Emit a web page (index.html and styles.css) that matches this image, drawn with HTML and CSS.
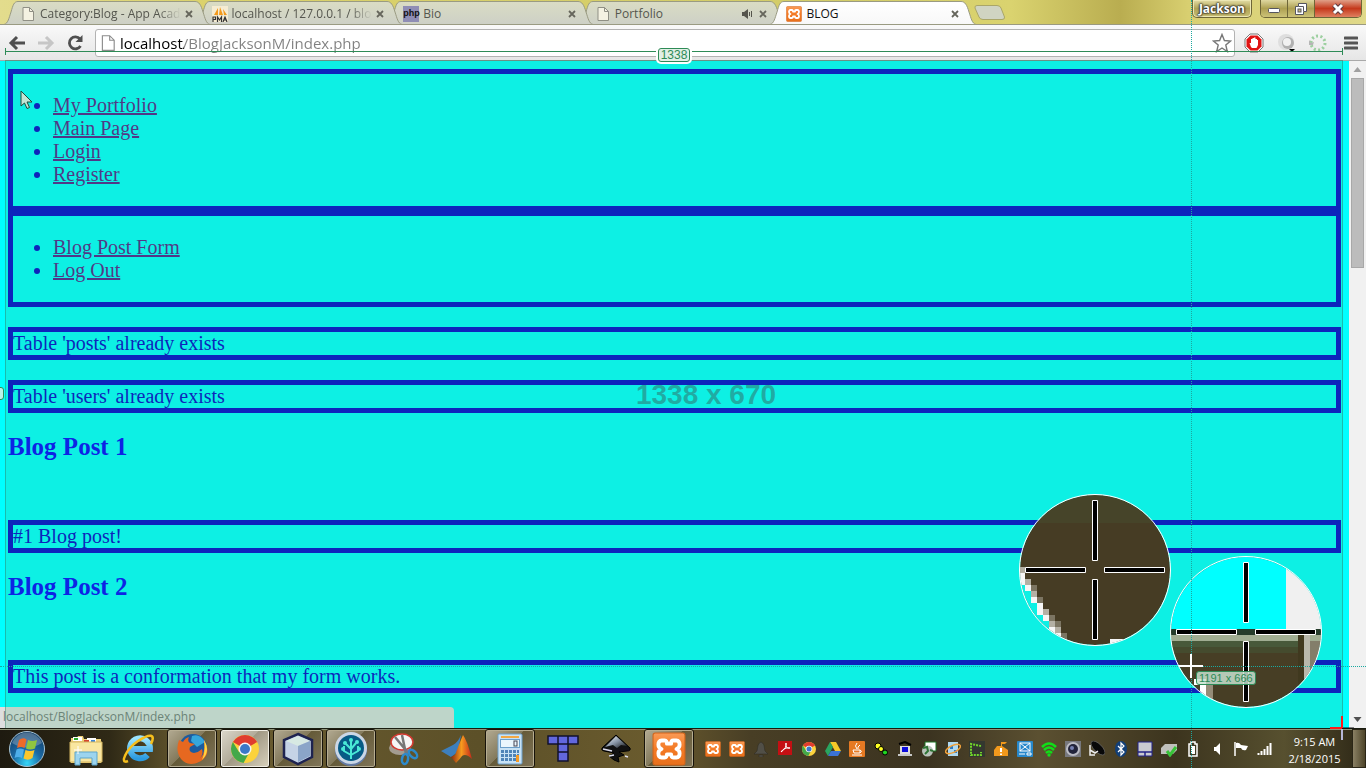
FILE: index.html
```html
<!DOCTYPE html>
<html lang="en">
<head>
<meta charset="utf-8">
<title>BLOG</title>
<link rel="stylesheet" href="styles.css">
</head>
<body>
<svg class="defs" aria-hidden="true">
  <defs>
    <linearGradient id="gTab" x1="0" y1="0" x2="0" y2="1"><stop offset="0" stop-color="#dadcc4"/><stop offset="1" stop-color="#cdd0c6"/></linearGradient>
    <linearGradient id="gActive" x1="0" y1="0" x2="0" y2="1"><stop offset="0" stop-color="#ffffff"/><stop offset="1" stop-color="#f8f8f8"/></linearGradient>
    <linearGradient id="gOrange" x1="0" y1="0" x2="0" y2="1"><stop offset="0" stop-color="#fa9a55"/><stop offset=".5" stop-color="#f47a25"/><stop offset="1" stop-color="#e8701c"/></linearGradient>
    <radialGradient id="gOrb" cx=".5" cy=".9" r=".9"><stop offset="0" stop-color="#35d6f8"/><stop offset=".45" stop-color="#1b6aa5"/><stop offset="1" stop-color="#123c66"/></radialGradient>
    <linearGradient id="gIe" x1="0" y1="0" x2="0" y2="1"><stop offset="0" stop-color="#9be4ff"/><stop offset="1" stop-color="#2c9be0"/></linearGradient>
    <linearGradient id="gMat" x1="0" y1="0" x2="1" y2="0"><stop offset="0" stop-color="#8a2a10"/><stop offset=".5" stop-color="#f79a1e"/><stop offset="1" stop-color="#c4281a"/></linearGradient>
    <linearGradient id="gInk" x1="0" y1="0" x2="1" y2="1"><stop offset="0" stop-color="#ffffff"/><stop offset=".5" stop-color="#8a97a8"/><stop offset="1" stop-color="#111111"/></linearGradient>
  </defs>
  <symbol id="tabShape" viewBox="0 0 206 25"><path d="M0 24.500C4 23.500 5 18 7 12C9 5 10 1.500 14 1.500H191C195 1.500 197 5 199 12C201 18 202 23.500 206 24.500Z"/></symbol>
  <symbol id="doc" viewBox="0 0 16 16"><path d="M3 1.500H9.500L13.500 5.500V14.500H3Z" fill="#f4f2e2" stroke="#8f8f84"/><path d="M9.500 1.500V5.500H13.500" fill="none" stroke="#8f8f84"/></symbol>
  <symbol id="xampp" viewBox="0 0 32 32"><rect x="1" y="1" width="30" height="30" rx="2" fill="url(#gOrange)" stroke="#d4651a"/><path d="M9 8Q6 8 6 12Q6 15 9 16Q6 17 6 20Q6 24 9 24H12Q14 24 14 21H18Q18 24 20 24H23Q26 24 26 20Q26 17 23 16Q26 15 26 12Q26 8 23 8H20Q18 8 18 11H14Q14 8 12 8Z" fill="none" stroke="#fff" stroke-width="3.600" stroke-linejoin="round"/></symbol>
  <symbol id="chrome" viewBox="0 0 32 32"><circle cx="16" cy="16" r="14" fill="#fbd23c"/><path d="M16 16L3.900 9A14 14 0 0 1 28.100 9Z" fill="#e03c2f"/><path d="M3.900 9A14 14 0 0 0 14.500 29.900L20 20L10 19Z" fill="#43a84a"/><circle cx="16" cy="16" r="6.500" fill="#f5f5f5"/><circle cx="16" cy="16" r="5" fill="#3a78c8"/></symbol>
  <symbol id="x" viewBox="0 0 16 16"><path d="M5 5L11 11M11 5L5 11" stroke="#66665c" stroke-width="1.800"/></symbol>
</svg>

<div class="desktop">
  <header class="titlebar">
    <div class="tabs">
      <div class="tab t1"><svg class="shape"><use href="#tabShape"/></svg><svg class="i16"><use href="#doc"/></svg><button class="tab-title" type="button">Category:Blog - App Acad</button><button class="close" type="button" aria-label="Close tab"><svg class="i16"><use href="#x"/></svg></button></div>
      <div class="tab t2"><svg class="shape"><use href="#tabShape"/></svg><svg class="i16" viewBox="0 0 16 16"><rect width="16" height="16" fill="#f5ecd2"/><path d="M2 9L6 2V9ZM7 9L8 1L11 9ZM12 9L11 3L15 9Z" fill="#f49a1c"/><path d="M1 16V11H3.500V13.500H1M5.500 16V11L7.500 14L9.500 11V16M11 16L13 11L15 16M12 14H14" fill="none" stroke="#333" stroke-width="1.200"/></svg><button class="tab-title" type="button">localhost / 127.0.0.1 / blog</button><button class="close" type="button" aria-label="Close tab"><svg class="i16"><use href="#x"/></svg></button></div>
      <div class="tab t3"><svg class="shape"><use href="#tabShape"/></svg><span class="php">php</span><button class="tab-title" type="button">Bio</button><button class="close" type="button" aria-label="Close tab"><svg class="i16"><use href="#x"/></svg></button></div>
      <div class="tab t4"><svg class="shape"><use href="#tabShape"/></svg><svg class="i16"><use href="#doc"/></svg><button class="tab-title" type="button">Portfolio</button><svg class="i16" viewBox="0 0 16 16"><path d="M3 6H5L9 3V13L5 10H3Z" fill="#55554c"/><path d="M10.500 6V10M12.500 5V11" stroke="#55554c"/></svg><button class="close" type="button" aria-label="Close tab"><svg class="i16"><use href="#x"/></svg></button></div>
      <div class="tab active"><svg class="shape"><use href="#tabShape"/></svg><svg class="i16"><use href="#xampp"/></svg><button class="tab-title" type="button">BLOG</button><button class="close" type="button" aria-label="Close tab"><svg class="i16"><use href="#x"/></svg></button></div>
      <button class="newtab" type="button" aria-label="New tab"><svg width="32" height="16" viewBox="0 0 32 16"><path d="M3 .5H23Q26 .5 27 3L30.500 12Q31 14.500 28 14.500H9Q6 14.500 5 12L1 3Q.5 .5 3 .5Z" fill="#d0d4c2" stroke="#aaa668"/></svg></button>
    </div>
    <div class="window-controls">
      <button class="user" type="button">Jackson</button>
      <div class="winbtns">
        <button class="wb" type="button" aria-label="Minimize"><svg width="14" height="14" viewBox="0 0 14 14"><rect x="1.500" y="6.500" width="11" height="4" rx="1" fill="#fff" stroke="#55555f"/></svg></button>
        <button class="wb" type="button" aria-label="Restore"><svg width="14" height="14" viewBox="0 0 14 14"><path d="M4.500 1.500H12.500V9.500H9.500V12.500H1.500V4.500H4.500Z" fill="#fff" stroke="#55555f"/><rect x="4" y="7" width="3" height="3" fill="#c9bf79" stroke="#55555f"/><path d="M5 4.500H9.500V9" fill="none" stroke="#55555f"/></svg></button>
        <button class="wb wclose" type="button" aria-label="Close"><svg width="14" height="14" viewBox="0 0 14 14"><path d="M3 3L11 11M11 3L3 11" stroke="#5b3a40" stroke-width="5"/><path d="M3 3L11 11M11 3L3 11" stroke="#fff" stroke-width="3"/></svg></button>
      </div>
    </div>
  </header>

  <nav class="toolbar">
    <button class="tool" type="button" aria-label="Back"><svg width="18" height="18" viewBox="0 0 18 18"><path d="M17 9H3M9 3L3 9L9 15" fill="none" stroke="#4f4f4f" stroke-width="3"/></svg></button>
    <button class="tool" type="button" aria-label="Forward"><svg width="18" height="18" viewBox="0 0 18 18"><path d="M1 9H15M9 3L15 9L9 15" fill="none" stroke="#c6c6c6" stroke-width="3"/></svg></button>
    <button class="tool" type="button" aria-label="Reload"><svg width="18" height="18" viewBox="0 0 18 18"><path d="M14 5A6 6 0 1 0 14.500 12" fill="none" stroke="#4f4f4f" stroke-width="2.800"/><path d="M16.500 1V8H9.500Z" fill="#4f4f4f"/></svg></button>
    <div class="omnibox">
      <svg width="18" height="18" viewBox="0 0 16 16"><path d="M3 1.500H9.500L13.500 5.500V14.500H3ZM9.500 1.500V5.500H13.500" fill="#fff" stroke="#8b8b8b"/></svg>
      <input class="url" type="text" value="localhost/BlogJacksonM/index.php" aria-label="Address">
      <button class="star" type="button" aria-label="Bookmark"><svg width="20" height="20" viewBox="0 0 20 20"><path d="M10 1.500L12.400 7.500L18.500 8L13.800 12L15.300 18.500L10 15L4.700 18.500L6.200 12L1.500 8L7.600 7.500Z" fill="#fff" stroke="#777" stroke-width="1.400"/></svg></button>
    </div>
    <div class="extensions">
      <button class="tool" type="button" aria-label="Ad blocker"><svg width="20" height="20" viewBox="0 0 20 20"><path d="M6 1H14L19 6V14L14 19H6L1 14V6Z" fill="#fff" stroke="#777"/><path d="M6.500 2.500H13.500L17.500 6.500V13.500L13.500 17.500H6.500L2.500 13.500V6.500Z" fill="#e01515"/><path d="M7 14L5.500 10L7 10V6H8.500V5H10V4.500H11.500V6H13V7H14V12L12.500 15H8Z" fill="#fff"/></svg></button>
      <button class="tool" type="button" aria-label="Extension"><svg width="20" height="20" viewBox="0 0 20 20"><circle cx="10" cy="9" r="8" fill="#dedede"/><circle cx="12" cy="10" r="6" fill="#b0b0b0"/><circle cx="11" cy="9" r="4" fill="#f1f1f1"/><path d="M13 16H19L16 19Z" fill="#000"/></svg></button>
      <button class="tool" type="button" aria-label="Extension"><svg width="20" height="20" viewBox="0 0 20 20"><circle cx="10" cy="10" r="7" fill="none" stroke="#9ccf9f" stroke-width="3" stroke-dasharray="2 2.400"/><path d="M1 7L3 10L6 9L5 12L1 12" fill="#b5b5b5"/></svg></button>
      <button class="tool" type="button" aria-label="Menu"><svg width="14" height="20" viewBox="0 0 14 20"><path d="M1 5H13M1 10H13M1 15H13" stroke="#555" stroke-width="3" stroke-linecap="round"/></svg></button>
    </div>
  </nav>

  <div class="viewport">
    <main class="page">
      <nav class="box"><ul>
        <li><a href="#portfolio">My Portfolio</a></li>
        <li><a href="#main">Main Page</a></li>
        <li><a href="#login">Login</a></li>
        <li><a href="#register">Register</a></li>
      </ul></nav>
      <nav class="box"><ul>
        <li><a href="#form">Blog Post Form</a></li>
        <li><a href="#logout">Log Out</a></li>
      </ul></nav>
      <p class="box">Table 'posts' already exists</p>
      <p class="box">Table 'users' already exists</p>
      <h2>Blog Post 1</h2>
      <br>
      <p class="box">#1 Blog post!</p>
      <h2>Blog Post 2</h2>
      <br>
      <p class="box">This post is a conformation that my form works.</p>
    </main>
    <div class="scrollbar">
      <svg width="17" height="17" viewBox="0 0 17 17"><path d="M8.500 6L12.500 11H4.500Z" fill="#a0a0a0"/></svg>
      <div class="track"><div class="thumb"></div></div>
      <svg width="17" height="17" viewBox="0 0 17 17"><path d="M4.500 6H12.500L8.500 11Z" fill="#505050"/></svg>
    </div>
    <div class="status">localhost/BlogJacksonM/index.php</div>
    <svg class="pointer" width="13" height="20" viewBox="0 0 13 20"><path d="M1 1V16L4.500 13L7 18.500L9.500 17.500L7 12H12Z" fill="#e4f2ec" stroke="#17302c"/></svg>
  </div>

  <footer class="taskbar">
    <button class="start" type="button" aria-label="Start"><svg width="38" height="38" viewBox="0 0 38 38"><circle cx="19" cy="19" r="17.500" fill="url(#gOrb)" stroke="#a8c4d4"/><path d="M4 13A16 16 0 0 1 34 13Q19 22 4 13Z" fill="#fff" opacity=".25"/><path d="M11 10Q15 7 18.500 9.500L16.500 18Q13 16 9 18Z" fill="#ee6a2a"/><path d="M20 10Q24 12 29 10L27 18.500Q22 20.500 18 18.500Z" fill="#8fc640"/><path d="M8.500 19.500Q12 17.500 16 19.500L14 28Q10 26 6.500 28Z" fill="#4eaeea"/><path d="M17.500 20Q22 22 26.500 20L24.500 28Q20 31 15.500 28.500Z" fill="#fbc72c"/></svg></button>
    <div class="apps">
      <button class="app" type="button" aria-label="Explorer"><svg width="34" height="34" viewBox="0 0 34 34"><path d="M2 6H8L9 4H14L15 7H32V31H2Z" fill="#f0d27a"/><path d="M4 5H13V9H4ZM18 6H27V10H18Z" fill="#fff"/><path d="M5 6H9V8H5Z" fill="#2da82d"/><path d="M15 8H20V10H15Z" fill="#d6452f"/><path d="M22 8H26V10H22Z" fill="#3c86d8"/><path d="M1 10H33V30H1Z" fill="#f9e6a0" stroke="#d3b560"/><path d="M6 33V20H28V33H23V26H11V33Z" fill="#9cd4ee" stroke="#5ea5c9"/><path d="M9 14V22M5 18H13" stroke="#fff"/></svg></button>
      <button class="app" type="button" aria-label="Internet Explorer"><svg width="34" height="34" viewBox="0 0 34 34"><path d="M25.500 23A10 10 0 1 1 28 17H9" fill="none" stroke="url(#gIe)" stroke-width="6"/><path d="M6 29C-3 33 4 17 16 9S34 2 29 12" fill="none" stroke="#f6bf1d" stroke-width="2.500"/></svg></button>
      <button class="app open" type="button" aria-label="Firefox"><svg width="34" height="34" viewBox="0 0 34 34"><circle cx="18" cy="16" r="14" fill="#1c5c9f"/><path d="M17 4Q25 1 30 10L22 15L16 9Z" fill="#35a6dc"/><path d="M4 8L8 10Q10 6 14 5Q12 9 15 11L20 12L15 15Q13 20 19 21Q24 20 27 17Q29 24 23 27Q31 24 29 8Q37 22 26 29Q14 36 6 27Q0 19 4 8Z" fill="#e66820"/><path d="M29 8Q36 19 27 28Q31 20 29 8Z" fill="#ffd840"/></svg></button>
      <button class="app open current" type="button" aria-label="Chrome"><svg width="32" height="32"><use href="#chrome"/></svg></button>
      <button class="app open" type="button" aria-label="NetBeans"><svg width="34" height="34" viewBox="0 0 34 34"><path d="M17 2L31 8V25L17 32L3 25V8Z" fill="#c5d3e6" stroke="#1e2350" stroke-width="2.500"/><path d="M5 9L17 4L29 9L17 14Z" fill="#d7e9e3"/><path d="M17 14L29 9V24L17 30Z" fill="#8ba5c8"/></svg></button>
      <button class="app open" type="button" aria-label="SmartGit"><svg width="34" height="36" viewBox="0 0 34 36"><circle cx="17" cy="19" r="16" fill="#637aa4"/><circle cx="17" cy="17" r="16" fill="#cbd7e6"/><circle cx="17" cy="17" r="13" fill="#075b86"/><path d="M17 28V10M17 24L10 20V15M17 24L24 20V15M17 18L12 13M17 18L22 12" fill="none" stroke="#49ead6" stroke-width="2"/><g fill="#49ead6"><circle cx="17" cy="9" r="2"/><circle cx="11" cy="12" r="2"/><circle cx="23" cy="11" r="2"/><circle cx="9" cy="18" r="2"/><circle cx="25" cy="18" r="2"/></g></svg></button>
      <button class="app" type="button" aria-label="Snipping Tool"><svg width="34" height="34" viewBox="0 0 34 34"><ellipse cx="13" cy="16" rx="11" ry="7" fill="#a39c90"/><ellipse cx="15" cy="10" rx="11" ry="8" fill="#f6f6f6" stroke="#d43a31" stroke-width="1.500"/><path d="M8 5L22 22M15 3L19 22" stroke="#777" stroke-width="2.500"/><ellipse cx="26" cy="22" rx="3" ry="5" transform="rotate(-45 26 22)" fill="none" stroke="#2d8acb" stroke-width="2.500"/><ellipse cx="18" cy="27" rx="3" ry="5" transform="rotate(10 18 27)" fill="none" stroke="#2d8acb" stroke-width="2.500"/></svg></button>
      <button class="app" type="button" aria-label="MATLAB"><svg width="34" height="34" viewBox="0 0 34 34"><path d="M1 19L11 14Q16 12 19 7L21 3L18 20L11 25Z" fill="#3d7fbd"/><path d="M11 25L15 23Q19 12 23 3Q27 8 32 27Q26 21 22 24Q20 27 16 31Z" fill="url(#gMat)"/></svg></button>
      <button class="app open" type="button" aria-label="Calculator"><svg width="26" height="32" viewBox="0 0 26 32"><rect x="1" y="1" width="24" height="30" rx="1" fill="#c8e2f5" stroke="#6c9fca"/><rect x="4" y="3" width="18" height="2" fill="#f2a844"/><rect x="3.500" y="6.500" width="19" height="8" fill="#eaf6fd" stroke="#6c9fca"/><rect x="17" y="8" width="3" height="5" fill="none" stroke="#445"/><path d="M4 18.500H22M4 22.500H22M4 26.500H22" stroke="#4e84b8" stroke-width="3" stroke-dasharray="3 1"/><path d="M20.500 22V29" stroke="#f59b27" stroke-width="3"/></svg></button>
      <button class="app" type="button" aria-label="Tetris"><svg width="34" height="34" viewBox="0 0 34 34"><path d="M2 4H32V12H22V29H12V12H2Z" fill="#6267de" stroke="#12122c" stroke-width="1.500"/><path d="M12 4V12H22V4M12 20H22" fill="none" stroke="#12122c" stroke-width="1.500"/></svg></button>
      <button class="app" type="button" aria-label="Inkscape"><svg width="34" height="34" viewBox="0 0 34 34"><path d="M17 3L31 16Q32 19 28 19L20 20L25 23L19 25L20 30L15 28L10 24L15 21L5 19Q1 18 4 15Z" fill="#111" stroke="#000"/><path d="M17 4L28 14L22 13L18 16L14 13L6 15Z" fill="url(#gInk)"/><path d="M4 17L13 19M10 24L15 23M26 24L29 25" stroke="#dde" stroke-width="1.500"/></svg></button>
      <button class="app open" type="button" aria-label="XAMPP"><svg width="34" height="34"><use href="#xampp"/></svg></button>
    </div>
    <div class="tray">
      <svg class="i16"><use href="#xampp"/></svg>
      <svg class="i16"><use href="#xampp"/></svg>
      <svg class="i16" viewBox="0 0 16 16"><path d="M8 1C4 3 5 7 4 10L1 13H15L12 10C11 7 12 3 8 1ZM6 14H10V16H6Z" fill="#514f47" stroke="#2c2a22" stroke-width=".5"/></svg>
      <svg class="i16" viewBox="0 0 16 16"><rect x="1" width="14" height="14" fill="#c40f13"/><path d="M4 11Q10 7 9 2Q8 8 13 7Q7 6 4 11" fill="none" stroke="#fff"/></svg>
      <svg class="i16"><use href="#chrome"/></svg>
      <svg class="i16" viewBox="0 0 16 16"><path d="M5 1H11L16 10H10Z" fill="#f6c928"/><path d="M5 1L8 6L3 15L0 10Z" fill="#2aa560"/><path d="M6 10H16L13 15H3Z" fill="#3b72d4"/></svg>
      <svg class="i16" viewBox="0 0 16 16"><rect width="16" height="16" rx="1" fill="#e67a23"/><path d="M8 2Q5 5 8 8M11 4Q8 6 9 8M4 9H11V12H5ZM11 9Q14 10 11 12M3 14H13" fill="none" stroke="#fff"/></svg>
      <svg class="i16" viewBox="0 0 16 16"><circle cx="5" cy="5" r="3" fill="#ffff22" stroke="#000"/><circle cx="8" cy="8" r="2.500" fill="#ffff22" stroke="#000"/><circle cx="12" cy="11.500" r="2.500" fill="#20d820" stroke="#000"/></svg>
      <svg class="i16" viewBox="0 0 16 16"><path d="M2 3L8 1L14 4" fill="none" stroke="#000" stroke-width="2"/><rect x="3" y="5" width="10" height="8" fill="#dcdcdc"/><rect x="5" y="6" width="6" height="5" fill="#0b0bdc"/><path d="M1 13H15V15H1Z" fill="#c8c8c8"/></svg>
      <svg class="i16" viewBox="0 0 16 16"><path d="M4 1H15V10H4Z" fill="#fff" stroke="#1e7526"/><circle cx="6.500" cy="10" r="5.500" fill="#b9c2ba"/><path d="M2 7L6 6L7 10L4 13M9 9L12 10" stroke="#2e7434" stroke-width="2" fill="none"/></svg>
      <svg class="i16" viewBox="0 0 16 16"><rect x="3" y="1" width="10" height="14" fill="#afd9f1"/><path d="M5 5H8V8H5ZM9 9H12V12H9Z" fill="#2e7ac2"/><ellipse cx="8" cy="8" rx="8" ry="3.500" transform="rotate(-25 8 8)" fill="none" stroke="#f0a13a" stroke-width="1.500"/></svg>
      <svg class="i16" viewBox="0 0 16 16"><rect width="16" height="16" fill="#34382f"/><path d="M12 5L7 4L2 3V14H12V11" fill="none" stroke="#70d52b" stroke-width="2" stroke-dasharray="2 1"/></svg>
      <svg class="i16" viewBox="0 0 16 16"><path d="M1 9L4 5H8V1H14L12 3H9V5L15 9V15H1Z" fill="#f2991c"/><path d="M8 7V11M8 12.500V14" stroke="#fff" stroke-width="2"/></svg>
      <svg class="i16" viewBox="0 0 16 16"><rect width="16" height="16" rx="1" fill="#2788cb"/><rect x="3" y="2" width="10" height="8" fill="none" stroke="#fff"/><path d="M3 2L13 10M13 2L3 10M2 13H8M10 12H14V14H10Z" fill="none" stroke="#fff"/></svg>
      <svg class="i16" viewBox="0 0 16 16"><path d="M1 6Q8 -1 15 6M3 9Q8 4 13 9M5 12Q8 9 11 12" fill="none" stroke="#10df18" stroke-width="2.500"/><circle cx="8" cy="14" r="1.700" fill="#10df18"/></svg>
      <svg class="i16" viewBox="0 0 16 16"><rect width="16" height="16" fill="#77787d"/><circle cx="8" cy="8" r="7" fill="#bbbcc4"/><circle cx="8" cy="8" r="5" fill="#22243a"/><circle cx="7" cy="7" r="2" fill="#7580b0"/></svg>
      <svg class="i16" viewBox="0 0 16 16"><ellipse cx="9" cy="7" rx="4" ry="9" transform="rotate(-45 9 7)" fill="#080808" stroke="#777" stroke-width=".6"/><path d="M1 4V14H6M1 9L6 12L9 10" fill="none" stroke="#eee" stroke-width="1.500"/></svg>
      <svg class="i16" viewBox="0 0 16 16"><ellipse cx="8" cy="8" rx="6" ry="8" fill="#123f78"/><path d="M5 5L11 11L8 14V2L11 5L5 11" fill="none" stroke="#fff" stroke-width="1.200"/></svg>
      <svg class="i16" viewBox="0 0 16 16"><path d="M1 1H15V15H1Z" fill="#c9cad0" stroke="#232387"/><path d="M1 11H15M8 11V15" stroke="#232387" stroke-width="1.500"/></svg>
      <svg class="i16" viewBox="0 0 16 16"><path d="M0 7L4 3H16V9L12 13H0Z" fill="#bfc0bc"/><path d="M6 10L9 14L15 6" fill="none" stroke="#38c338" stroke-width="3"/></svg>
      <svg class="i16" viewBox="0 0 16 16"><path d="M6 1H10V3H12V15H4V3H6Z" fill="none" stroke="#fff" stroke-width="1.500"/><rect x="6" y="5" width="4" height="8" fill="#fff"/></svg>
      <svg class="i16" viewBox="0 0 16 16"><path d="M5 6H7L11 2V14L7 10H5Z" fill="#fff"/></svg>
      <svg class="i16" viewBox="0 0 16 16"><path d="M2 1V15" stroke="#fff" stroke-width="1.500"/><path d="M3 2Q6 1 8 4L15 5L13 9Q9 10 8 7H3Z" fill="#fff"/></svg>
      <svg class="i16" viewBox="0 0 16 16"><path d="M1.500 14V12M4.500 14V10M7.500 14V8M10.500 14V5M13.500 14V2" stroke="#fff" stroke-width="2"/></svg>
    </div>
    <div class="clock"><time>9:15 AM</time><time>2/18/2015</time></div>
    <button class="show-desktop" type="button" aria-label="Show desktop"></button>
  </footer>

  <!-- screen ruler drawn above every window -->
  <div class="ruler">
    <div class="area"><span class="size">1338 x 670</span></div>
    <div class="span"><span class="tag">1338</span></div>
    <span class="tag side"></span>
    <svg class="lens one" width="154" height="154" viewBox="0 0 154 154">
      <clipPath id="c1"><circle cx="77" cy="77" r="75"/></clipPath>
      <g clip-path="url(#c1)" shape-rendering="crispEdges"><rect width="154" height="154" fill="#463c24"/><rect width="154" height="30" fill="#464429"/><path d="M0 92H7V98H13V110H19V122H25V128H31V140H37V146H43V154H0Z" fill="#0df0e4"/><path d="M1 74H7V80H1ZM7 86H13V92H7ZM13 98H19V104H13ZM19 104H25V110H19ZM25 116H31V122H25ZM31 128H37V134H31ZM37 134H43V140H37Z" fill="#b4b0a4"/><path d="M13 92H19V98H13ZM19 110H25V104H19ZM31 122H37V128H31ZM37 128H43V134H37ZM43 140H49V146H43Z" fill="#7c7562"/><path d="M1 80H7V92H1ZM7 92H13V98H7ZM13 104H19V110H13ZM19 110H25V122H19ZM25 122H31V128H25ZM31 134H37V140H31ZM37 140H43V146H37ZM43 146H49V152H43ZM92 146H107V154H92Z" fill="#f6f6f6"/></g>
      <circle cx="77" cy="77" r="75.500" fill="none" stroke="#fff"/>
      <path d="M74.500 7.500H79.500V67.500H74.500ZM74.500 86.500H79.500V146.500H74.500ZM7.500 74.500H67.500V79.500H7.500ZM86.500 74.500H146.500V79.500H86.500Z" fill="#000" stroke="#fff"/>
    </svg>
    <svg class="lens two" width="154" height="154" viewBox="0 0 154 154">
      <clipPath id="c2"><circle cx="77" cy="77" r="75"/></clipPath>
      <g clip-path="url(#c2)" shape-rendering="crispEdges"><rect width="154" height="154" fill="#473e25"/><rect width="154" height="75" fill="#00ffff"/><rect x="117" width="40" height="75" fill="#f0f0f0"/><rect y="74" width="154" height="6" fill="#253c2b"/><rect y="80" width="154" height="6" fill="#a0ad92"/><rect y="86" width="129" height="6" fill="#48593a"/><rect y="92" width="129" height="6" fill="#454b2e"/><rect x="129" y="80" width="6" height="74" fill="#40391f"/><rect x="135" y="80" width="6" height="74" fill="#b9b8ac"/><rect x="141" y="86" width="13" height="68" fill="#837e6a"/><path d="M25 124H37V136H43V154H31V130H25Z" fill="#fff"/><path d="M37 130H44V154H37Z" fill="#958c78"/></g>
      <circle cx="77" cy="77" r="75.500" fill="none" stroke="#fff"/>
      <path d="M74.500 7.500H79.500V67.500H74.500ZM74.500 86.500H79.500V146.500H74.500ZM7.500 74.500H67.500V79.500H7.500ZM86.500 74.500H146.500V79.500H86.500Z" fill="#000" stroke="#fff"/>
    </svg>
    <div class="guide-v"></div>
    <div class="guide-h"></div>
    <svg class="cross" width="24" height="24" viewBox="0 0 24 24"><path d="M12 0V24M0 12H24" stroke="#fff" stroke-width="2"/></svg>
    <span class="tag coords">1191 x 666</span>
    <svg class="corner" width="24" height="24" viewBox="0 0 24 24"><path d="M0 12H12M12 0V12" stroke="#ff1a1a" stroke-width="2"/><path d="M13 12H24" stroke="#111"/><path d="M12 13V24" stroke="#b6b6d8" stroke-width="2"/></svg>
  </div>
</div>
</body>
</html>
```
FILE: styles.css
```css
* { box-sizing: border-box; }
body { margin: 0; }
button { padding: 0; border: 0; background: none; font: inherit; color: inherit; }
svg { display: block; flex: none; }
.defs { position: absolute; width: 0; height: 0; }
.i16 { width: 16px; height: 16px; }

.desktop { position: relative; display: flex; flex-direction: column; height: 100vh; overflow: hidden; font: 12px/16px "Open Sans", "Noto Sans", sans-serif; }

/* title bar */
.titlebar { display: flex; justify-content: space-between; align-items: flex-start; height: 25px; padding-left: 12px; background: linear-gradient(90deg, #e3dc8d, #dbd26b 15%, #d3cc68 60%, #dad36f 74%, #b9ad50 82%, #d8cf70 87%, #e0d98a); border-bottom: 1px solid #9b9a80; flex: none; }
.tabs { display: flex; flex: 0 1 994px; min-width: 0; }
.tab { position: relative; display: flex; align-items: center; flex: 0 1 192px; min-width: 0; height: 25px; padding: 2px 7px 0 8px; color: #55564e; }
.tab > * { position: relative; }
.tab > .shape { position: absolute; left: -8px; top: 0; width: 206px; height: 25px; fill: url(#gTab); stroke: #9a9b82; }
.t1 { z-index: 4; }
.t2 { z-index: 3; }
.t3 { z-index: 2; }
.t4 { z-index: 1; }
.active { z-index: 5; color: #111; }
.active > .shape { fill: url(#gActive); }
.tab-title { flex: 1; min-width: 0; margin: 0 -6px 0 4px; overflow: hidden; white-space: nowrap; text-align: left; }
.tab-title + * { margin-left: 6px; }
.t1 .tab-title, .t2 .tab-title { -webkit-mask-image: linear-gradient(90deg, #000 84%, transparent); mask-image: linear-gradient(90deg, #000 84%, transparent); }
.php { width: 16px; height: 16px; background: #8f8db5; color: #111; font: bold 9px/14px "Liberation Sans", Arial, sans-serif; text-align: center; }
.newtab { margin: 5px 0 0 4px; height: 16px; }
.window-controls { display: flex; gap: 8px; padding-right: 4px; }
.user { height: 18px; padding: 0 6px; border: 1px solid #6e6637; border-top: 0; border-radius: 0 0 5px 5px; background: linear-gradient(#e3dda6, #b0a456 50%, #c9bf74); box-shadow: inset 0 0 0 1px #ece7b4; color: #fff; font: bold 12px/18px "Open Sans", "Noto Sans", sans-serif; text-shadow: 0 0 2px #222, 0 0 2px #222, 0 0 2px #222; }
.winbtns { display: flex; height: 18px; border: 1px solid #6e6637; border-top: 0; border-radius: 0 0 5px 5px; overflow: hidden; }
.wb { display: grid; place-items: center; width: 27px; border-right: 1px solid #6e6637; background: linear-gradient(#ded7a0, #ada052 50%, #ccc278); }
.wclose { width: 46px; border: 0; background: linear-gradient(#e0a088, #c5391c 50%, #e08060); }

/* toolbar */
.toolbar { display: flex; align-items: center; flex: none; height: 35px; padding: 0 8px; background: linear-gradient(#f9f9f9, #e6e6e6); }
.tool { width: 18px; margin-right: 11px; }
.omnibox { display: flex; flex: 1; align-items: center; height: 28px; padding: 0 2px 0 3px; border: 1px solid #b3b3b3; border-radius: 3px; background: #fff; }
.url { flex: 1; min-width: 0; height: 24px; margin-left: 3px; padding: 0; border: 0; outline: 0; font: 15px/24px "Open Sans", "Noto Sans", sans-serif; color: #808080; background: linear-gradient(90deg, #000 64px, #808080 64px); -webkit-background-clip: text; background-clip: text; -webkit-text-fill-color: transparent; }
.extensions { display: flex; align-items: center; gap: 12px; padding-left: 9px; }
.extensions .tool { width: 20px; margin: 0; }
.extensions .tool:last-child { width: 14px; margin-left: 4px; }

/* page */
.viewport { position: relative; display: flex; flex: 1; min-height: 0; border-top: 1px solid #a9a9a9; }
.page { flex: 1; min-width: 0; padding: 8px; overflow: hidden; background: #00ffff; font: 20px/23px "Liberation Serif", "Times New Roman", serif; color: mediumblue; }
.page .box { border: 5px solid mediumblue; }
.page ul { margin: 20px 0; padding-left: 40px; }
.page a { color: #551a8b; }
.page p { margin: 20px 0; }
.page h2 { margin: 20px 0 16px; font-size: 25px; line-height: 28px; color: blue; }
.scrollbar { display: flex; flex-direction: column; width: 17px; background: #f1f1f1; }
.track { flex: 1; padding: 0 2px; }
.thumb { height: 30%; background: #bcbcbc; border: 1px solid #a8a8a8; }
.status { position: absolute; left: 0; bottom: 0; width: 454px; height: 21px; padding: 2px 3px; border-radius: 0 4px 0 0; background: #dedede; color: #777; }
.pointer { position: absolute; left: 20px; top: 29px; }

/* taskbar */
.taskbar { display: flex; flex: none; height: 40px; border-top: 1px solid #1a1d10; box-shadow: inset 0 1px #8f9478; background: linear-gradient(90deg, #1e1a10, #2f2916 8%, #6b5d31 14%, #5c5028 35%, #6a5b2e 48%, #483e25 55%, #3b3320 68%, #5b5031 76%, #3c341e 86%, #57502f 94%, #2d2716); }
.start { width: 54px; display: grid; place-items: center; margin-right: 7px; }
.apps { display: flex; gap: 3px; }
.app { display: grid; place-items: center; width: 50px; border-radius: 3px; }
.app.open { border: 1px solid #17130a; background: linear-gradient(135deg, #b3ab93, #83795b 45%, #655a38 46%, #81765a); box-shadow: inset 0 0 0 1px #b6ad92; }
.app.current { background: linear-gradient(135deg, #dcd8cc, #b3ac9a 45%, #a09884 46%, #d8d1bc); box-shadow: inset 0 0 0 1px #f1eee4; }
.tray { display: flex; flex: 1; align-items: center; justify-content: flex-end; gap: 8px; }
.clock { display: flex; flex-direction: column; align-items: center; width: 79px; padding: 4px 0 0 4px; color: #fff; font-size: 11px; line-height: 17px; }
.show-desktop { width: 14px; border: 1px solid #2b2617; background: linear-gradient(90deg, #8a8064, #4d4429); }

/* ruler overlay */
.ruler { position: absolute; inset: 0; z-index: 10; overflow: hidden; pointer-events: none; }
.ruler > * { position: absolute; }
.area { left: 5px; right: 23px; top: 60px; bottom: 40px; display: grid; place-items: center; border: 1px solid rgba(46, 110, 90, .4); border-bottom: 0; background: rgba(65, 180, 120, .2); }
.size { margin-left: 64px; color: rgba(46, 125, 120, .6); font: bold 28px/32px "Liberation Sans", Arial, sans-serif; }
.span { left: 5px; right: 23px; top: 48px; height: 7px; display: grid; place-items: center; border: solid #2e8b57; border-width: 0 1px; background: linear-gradient(#2e8b57, #2e8b57) 0 3px / 100% 1px no-repeat; }
.tag { padding: 0 2px; border: 1px solid #2e8b57; border-radius: 3px; background: rgba(220, 240, 228, .85); color: #2e8b57; font: 12px/12px "Liberation Sans", Arial, sans-serif; white-space: nowrap; }
.span .tag { background: #e2efe6; box-shadow: 0 0 0 2px #fff; }
.side { left: -8px; top: 387px; width: 12px; height: 13px; }
.lens.one { left: 1018px; top: 493px; }
.lens.two { left: 1169px; top: 555px; }
.guide-v { left: 1191px; top: 0; bottom: 0; border-left: 1px dotted #1ba9a0; }
.guide-h { top: 666px; left: 0; right: 0; border-top: 1px dotted #1ba9a0; }
.cross { left: 1179px; top: 654px; }
.tag.coords { left: 1196px; top: 671px; background: rgba(200, 225, 208, .85); font-size: 11px; }
.corner { right: 12px; bottom: 28px; }
```
